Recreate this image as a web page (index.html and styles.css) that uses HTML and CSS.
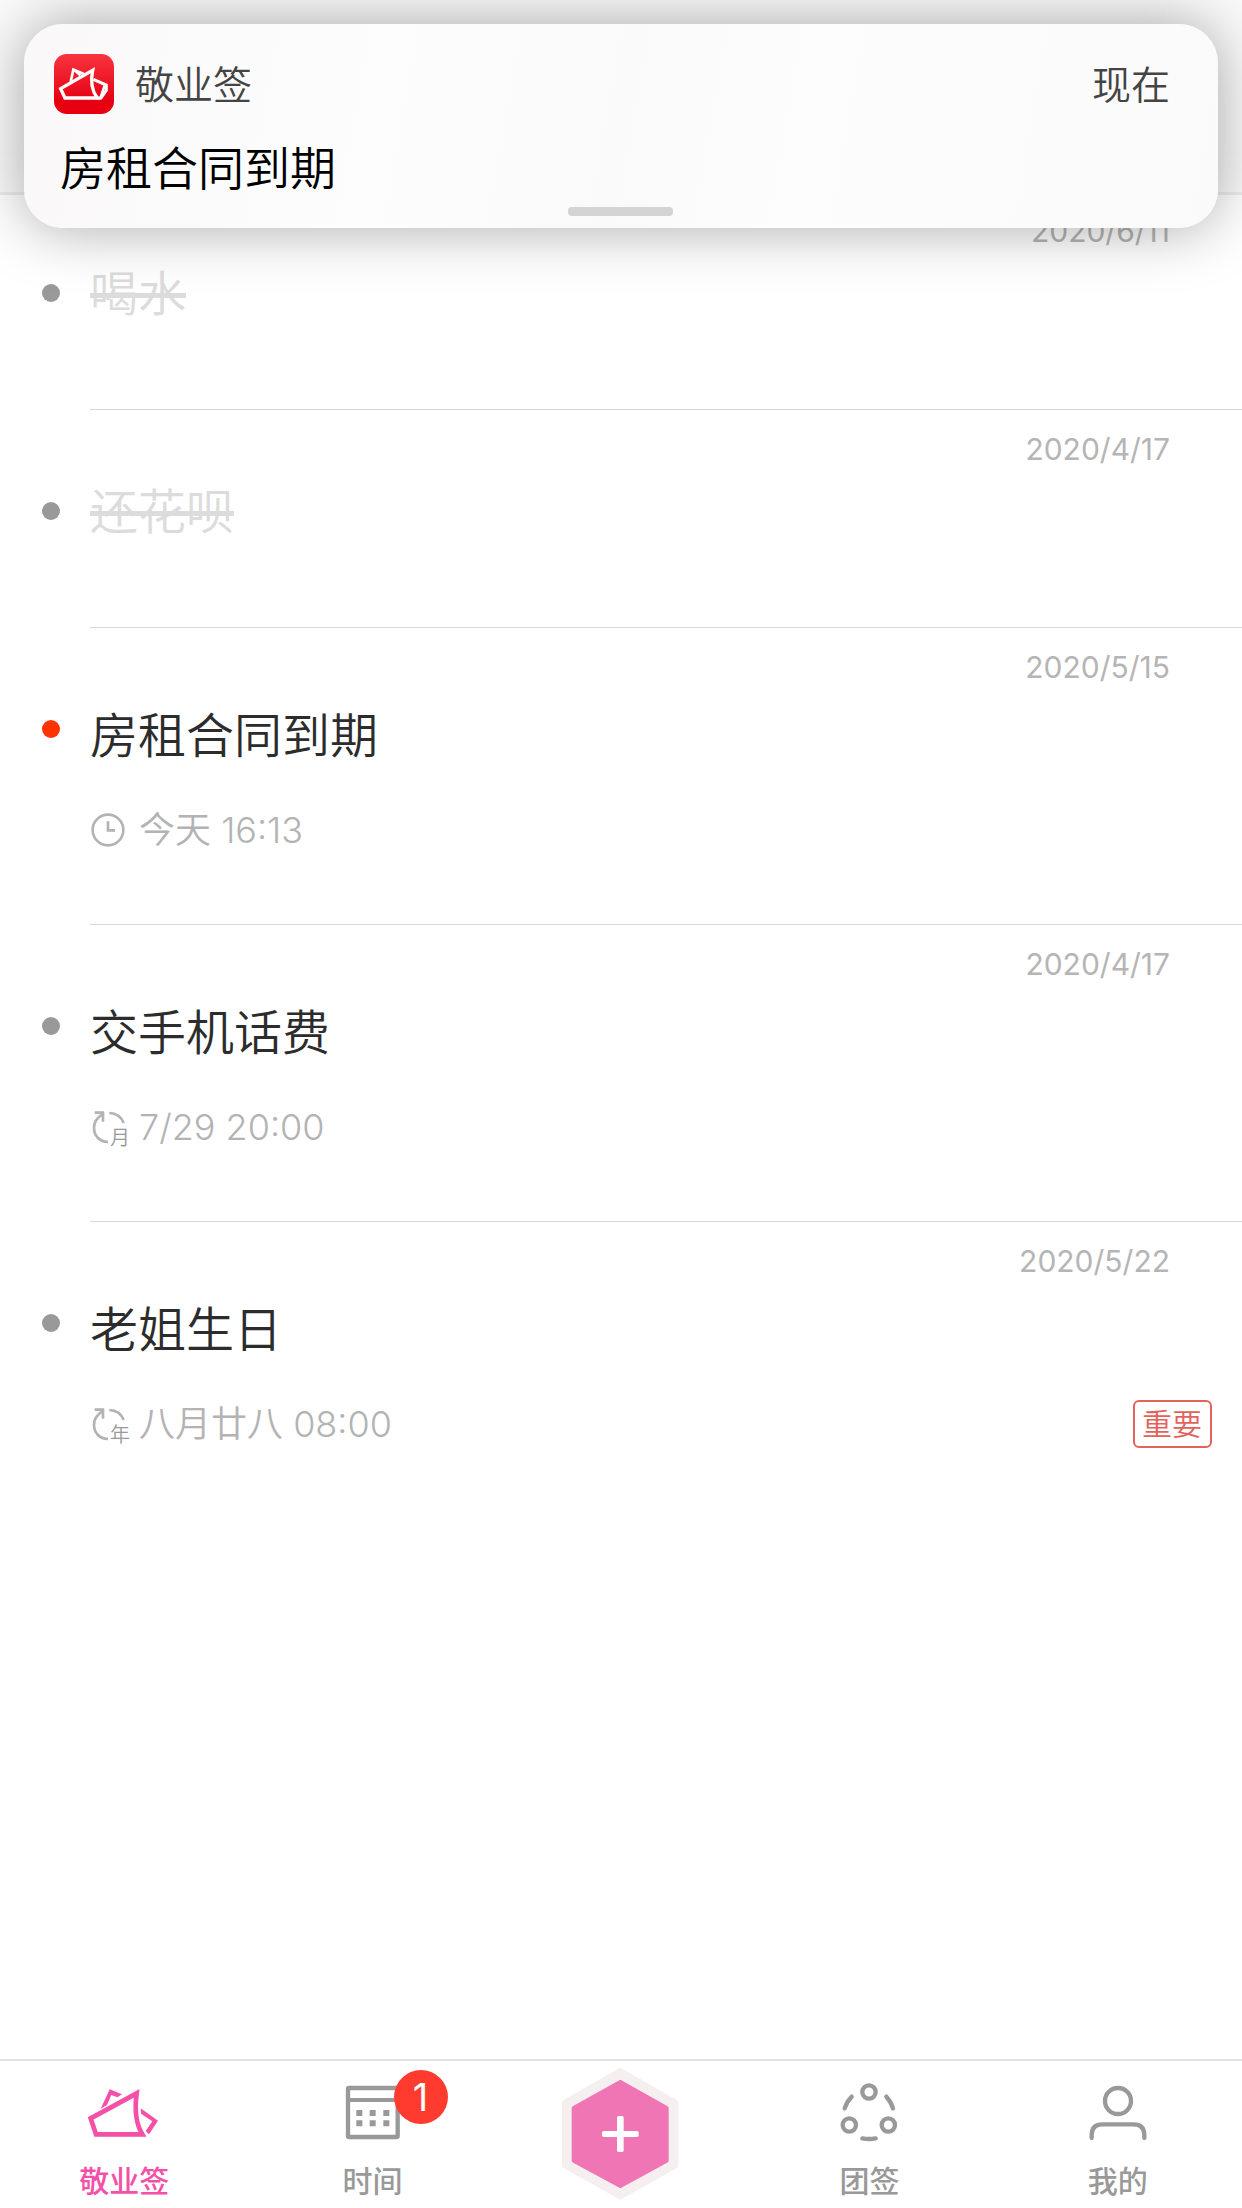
FILE: index.html
```html
<!DOCTYPE html>
<html lang="zh-CN">
<head>
<meta charset="utf-8">
<meta name="viewport" content="width=device-width, initial-scale=1">
<title>敬业签</title>
<link rel="stylesheet" href="styles.css">
</head>
<body>
<div class="app">
  <header class="topbar"></header>

  <main class="content">
    <ul class="notes">
      <li class="note note-done">
        <span class="dot"></span>
        <div class="note-body">
          <time class="note-date">2020/6/11</time>
          <h2 class="note-title">喝水</h2>
        </div>
      </li>
      <li class="note note-done">
        <span class="dot"></span>
        <div class="note-body">
          <time class="note-date">2020/4/17</time>
          <h2 class="note-title">还花呗</h2>
        </div>
      </li>
      <li class="note">
        <span class="dot dot-alert"></span>
        <div class="note-body">
          <time class="note-date">2020/5/15</time>
          <h2 class="note-title">房租合同到期</h2>
          <div class="meta">
            <span class="meta-icon">
              <svg viewBox="0 0 108 108" fill="none" stroke="currentColor" stroke-width="8">
                <circle cx="54" cy="54" r="46"/>
                <path d="M54 28V55H75"/>
              </svg>
            </span>
            <span>今天 16:13</span>
          </div>
        </div>
      </li>
      <li class="note">
        <span class="dot"></span>
        <div class="note-body">
          <time class="note-date">2020/4/17</time>
          <h2 class="note-title">交手机话费</h2>
          <div class="meta">
            <span class="meta-icon">
              <svg viewBox="0 0 108 108" fill="none" stroke="currentColor" stroke-width="8">
                <path d="M14 11H42M39 9V38M37 16C18 28 12 42 12 56C12 80 28 98 54 99M58 12C80 13 94 24 101 42"/>
              </svg>
              <span class="meta-cycle">月</span>
            </span>
            <span>7/29 20:00</span>
          </div>
        </div>
      </li>
      <li class="note">
        <span class="dot"></span>
        <div class="note-body">
          <time class="note-date">2020/5/22</time>
          <h2 class="note-title">老姐生日</h2>
          <div class="meta">
            <span class="meta-icon">
              <svg viewBox="0 0 108 108" fill="none" stroke="currentColor" stroke-width="8">
                <path d="M14 11H42M39 9V38M37 16C18 28 12 42 12 56C12 80 28 98 54 99M58 12C80 13 94 24 101 42"/>
              </svg>
              <span class="meta-cycle">年</span>
            </span>
            <span>八月廿八 08:00</span>
            <span class="tag">重要</span>
          </div>
        </div>
      </li>
    </ul>
  </main>

  <nav class="tabbar">
    <a class="tab tab-active" href="#notes">
      <span class="tab-icon">
        <svg viewBox="0 0 216 180" fill="none">
          <path d="M8 115L146 40C139 92 146 135 163 163H24Z" stroke="currentColor" stroke-width="14"/>
          <path d="M38 86L65 28L102 43L88 52L70 45L57 75ZM158 85L210 122L183 163L173 153L193 124L159 101Z" fill="currentColor"/>
        </svg>
      </span>
      <span>敬业签</span>
    </a>
    <a class="tab" href="#time">
      <span class="tab-icon">
        <svg viewBox="0 0 216 180">
          <rect x="33" y="24" width="149" height="147" rx="3" fill="none" stroke="currentColor" stroke-width="13"/>
          <path d="M33 60H182" stroke="currentColor" stroke-width="12"/>
          <path d="M58 90h18v18H58zM98 90h18v18H98zM139 90h18v18h-18zM58 121h18v18H58zM98 121h18v18H98zM139 121h18v18h-18z" fill="currentColor"/>
        </svg>
        <span class="badge">1</span>
      </span>
      <span>时间</span>
    </a>
    <button class="add" type="button" aria-label="新建">
      <svg viewBox="0 0 354 402">
        <path d="M178 10L345 106V296L178 391L10 296V106Z" fill="#f5efef" stroke="#f5efef" stroke-width="14" stroke-linejoin="round"/>
        <path d="M178 45L317 123V281L178 357L38 281V123Z" fill="#f075b4" stroke="#f075b4" stroke-width="12" stroke-linejoin="round"/>
        <rect x="123" y="192" width="110" height="18" rx="5" fill="#fff"/>
        <rect x="168" y="147" width="20" height="108" rx="5" fill="#fff"/>
      </svg>
    </button>
    <a class="tab" href="#team">
      <span class="tab-icon">
        <svg viewBox="0 0 216 180" fill="none" stroke="currentColor" stroke-width="13" stroke-linecap="round">
          <circle cx="108" cy="36" r="20"/>
          <circle cx="49" cy="135" r="20"/>
          <circle cx="166" cy="135" r="20"/>
          <path d="M56 50Q41 65 35 85M160 50Q174 65 180 85M88 175Q108 179 128 175"/>
        </svg>
      </span>
      <span>团签</span>
    </a>
    <a class="tab" href="#me">
      <span class="tab-icon">
        <svg viewBox="0 0 216 180" fill="none" stroke="currentColor" stroke-width="13" stroke-linecap="round">
          <circle cx="108" cy="63" r="39"/>
          <path d="M29 174V165Q29 133 61 133H155Q187 133 187 165V174"/>
        </svg>
      </span>
      <span>我的</span>
    </a>
  </nav>

  <aside class="notice">
    <div class="notice-head">
      <svg class="notice-logo" viewBox="0 0 180 180" fill="none" stroke="#fff">
        <defs>
          <linearGradient id="logo-red" x1="0" y1="0" x2="0" y2="1">
            <stop offset="0" stop-color="#f8343f"/>
            <stop offset=".8" stop-color="#e60012"/>
          </linearGradient>
        </defs>
        <rect width="180" height="180" rx="38" fill="url(#logo-red)" stroke="none"/>
        <path d="M20 104L116 49C109 82 114 111 130 132H33Z" stroke-width="10"/>
        <path d="M50 84L58 47L90 60M64 50L79 64" stroke-width="8"/>
        <path d="M118 76L157 93V109L141 132H126" stroke-width="9"/>
        <path d="M152 95L140 130" stroke-width="8"/>
      </svg>
      <span>敬业签</span>
      <span class="notice-time">现在</span>
    </div>
    <p class="notice-text">房租合同到期</p>
    <span class="notice-handle"></span>
  </aside>
</div>
</body>
</html>
```
FILE: styles.css
```css
* {
  box-sizing: border-box;
}

body {
  margin: 0;
  background: #fff;
  font-family: Inter, "Noto Sans CJK SC", sans-serif;
}

svg {
  display: block;
  overflow: visible;
}

.app {
  display: flex;
  flex-direction: column;
  min-height: 100vh;
}

.topbar {
  height: 195px;
  background: #fafafa;
  border-bottom: 3px solid #ededed;
}

.content {
  flex: 1;
}

/* Note list */

.notes {
  margin: -3px 0 0;
  padding: 0;
  list-style: none;
}

.note {
  display: flex;
}

.note:last-child .note-body {
  border-bottom: 0;
}

.dot {
  flex: none;
  width: 18px;
  height: 18px;
  margin: 92px 30px 0 42px;
  border-radius: 50%;
  background: #999;
}

.dot-alert {
  background: #ff3300;
}

.note-body {
  flex: 1;
  display: flex;
  flex-direction: column;
  min-height: 218px;
  padding: 21px 30px 67px 0;
  border-bottom: 1px solid #d6d7d8;
}

.note-date {
  align-self: flex-end;
  margin-right: 42px;
  color: #b5b5b5;
  font-size: 30px;
  line-height: 36px;
}

.note-title {
  margin: 15px 0 0;
  color: #2c2c2c;
  font-size: 48px;
  font-weight: 350;
  line-height: 72px;
}

.note-done .note-title {
  align-self: flex-start;
  color: #dcdcdc;
  line-height: 60px;
  text-decoration: line-through;
  text-decoration-thickness: 5px;
}

.meta {
  display: flex;
  align-items: center;
  gap: 12px;
  height: 54px;
  margin-top: 31px;
  color: #b3b3b3;
  font-size: 36px;
  font-weight: 350;
  line-height: 54px;
}

.meta-icon {
  position: relative;
  width: 37px;
  height: 36px;
}

.meta-icon svg {
  width: 36px;
  height: 36px;
}

.meta-cycle {
  position: absolute;
  right: -3px;
  bottom: -5px;
  color: #999;
  font-size: 20px;
  line-height: 24px;
}

.tag {
  margin-left: auto;
  padding: 0 8px 0 7px;
  border: 2px solid #e2625c;
  border-radius: 6px;
  color: #e2625c;
  font-size: 30px;
  line-height: 44px;
}

/* Bottom tabs */

.tabbar {
  display: grid;
  grid-template-columns: repeat(5, 1fr);
  height: 149px;
  border-top: 2px solid #e1e1e1;
}

.tab {
  display: flex;
  flex-direction: column;
  align-items: center;
  gap: 23px;
  padding-top: 19px;
  color: #999;
  font-size: 30px;
  font-weight: 500;
  line-height: 36px;
  text-decoration: none;
}

.tab-active {
  color: #f450a8;
}

.tab-icon {
  position: relative;
  width: 72px;
  height: 60px;
}

.badge {
  position: absolute;
  left: 57px;
  top: -10px;
  width: 54px;
  height: 54px;
  border-radius: 50%;
  background: #ff3b30;
  color: #fff;
  font-size: 38px;
  font-weight: 400;
  line-height: 54px;
  text-align: center;
}

.add {
  justify-self: center;
  width: 120px;
  height: 134px;
  margin-top: 6px;
  padding: 0 2px 0 0;
  border: 0;
  background: none;
}

/* Push notification above the page */

.notice {
  position: absolute;
  top: 24px;
  left: 24px;
  right: 24px;
  display: flex;
  flex-direction: column;
  height: 204px;
  padding: 30px 48px 12px 30px;
  border-radius: 39px;
  background: linear-gradient(100deg, #faf8f8, #fdfdfd 30%, #fafafa 50%, #fdfdfd 65%, #fafafa);
  box-shadow: 0 0 60px rgba(0, 0, 0, .34);
}

.notice-head {
  display: flex;
  align-items: center;
  height: 60px;
  color: #444;
  font-size: 39px;
  font-weight: 350;
  line-height: 60px;
}

.notice-head span {
  padding-top: 2px;
}

.notice-logo {
  width: 60px;
  height: 60px;
  margin-right: 21px;
}

.notice-time {
  margin-left: auto;
}

.notice-text {
  margin: 21px 0 0 6px;
  color: #000;
  font-size: 46px;
  font-weight: 350;
  line-height: 66px;
}

.notice-handle {
  position: absolute;
  left: 50%;
  bottom: 12px;
  width: 105px;
  height: 9px;
  margin-left: -53px;
  border-radius: 4px;
  background: #d4d4d4;
}
```
